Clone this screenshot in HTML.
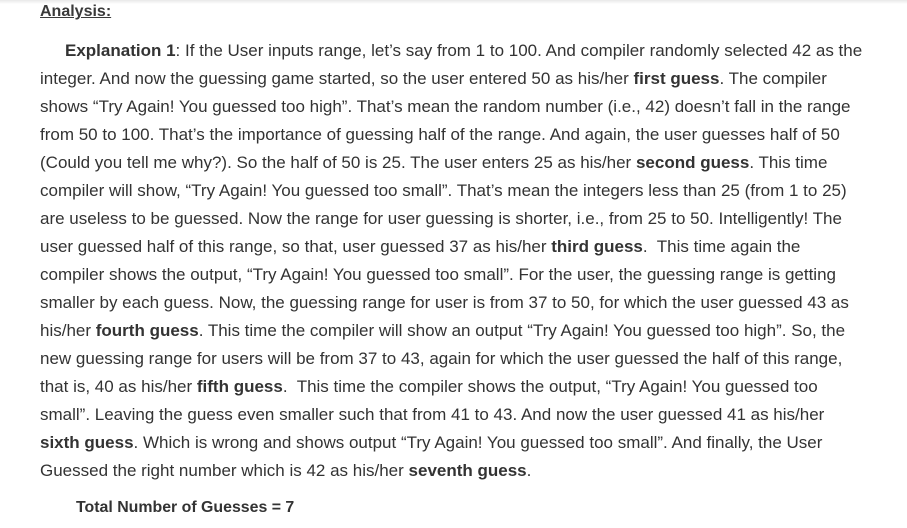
<!DOCTYPE html>
<html><head><style>
body{margin:0;width:907px;height:528px;background:#fff;font-family:"Liberation Sans",sans-serif;color:#333;overflow:hidden;position:relative}
.top{position:absolute;left:0;top:0;width:907px;height:4px;background:linear-gradient(#e8e8e8,#fff)}
.h{position:absolute;left:40px;top:3px;font-size:16px;font-weight:bold;text-decoration:underline;color:#3a3a3a}
.p{position:absolute;left:40px;top:37px;font-size:17px;line-height:28px;white-space:nowrap}
.t{position:absolute;left:76px;top:499px;font-size:15.9px;font-weight:bold}
b{color:#333}
</style></head><body>
<div class="top"></div>
<div class="h">Analysis:</div>
<div class="p">
<span style="padding-left:25px"><b>Explanation 1</b>: If the User inputs range, let’s say from 1 to 100. And compiler randomly selected 42 as the</span><br>
integer. And now the guessing game started, so the user entered 50 as his/her <b>first guess</b>. The compiler<br>
shows “Try Again! You guessed too high”. That’s mean the random number (i.e., 42) doesn’t fall in the range<br>
from 50 to 100. That’s the importance of guessing half of the range. And again, the user guesses half of 50<br>
(Could you tell me why?). So the half of 50 is 25. The user enters 25 as his/her <b>second guess</b>. This time<br>
compiler will show, “Try Again! You guessed too small”. That’s mean the integers less than 25 (from 1 to 25)<br>
are useless to be guessed. Now the range for user guessing is shorter, i.e., from 25 to 50. Intelligently! The<br>
user guessed half of this range, so that, user guessed 37 as his/her <b>third guess</b>.&nbsp; This time again the<br>
compiler shows the output, “Try Again! You guessed too small”. For the user, the guessing range is getting<br>
smaller by each guess. Now, the guessing range for user is from 37 to 50, for which the user guessed 43 as<br>
his/her <b>fourth guess</b>. This time the compiler will show an output “Try Again! You guessed too high”. So, the<br>
new guessing range for users will be from 37 to 43, again for which the user guessed the half of this range,<br>
that is, 40 as his/her <b>fifth guess</b>.&nbsp; This time the compiler shows the output, “Try Again! You guessed too<br>
small”. Leaving the guess even smaller such that from 41 to 43. And now the user guessed 41 as his/her<br>
<b>sixth guess</b>. Which is wrong and shows output “Try Again! You guessed too small”. And finally, the User<br>
Guessed the right number which is 42 as his/her <b>seventh guess</b>.
</div>
<div class="t">Total Number of Guesses = 7</div>
</body></html>
